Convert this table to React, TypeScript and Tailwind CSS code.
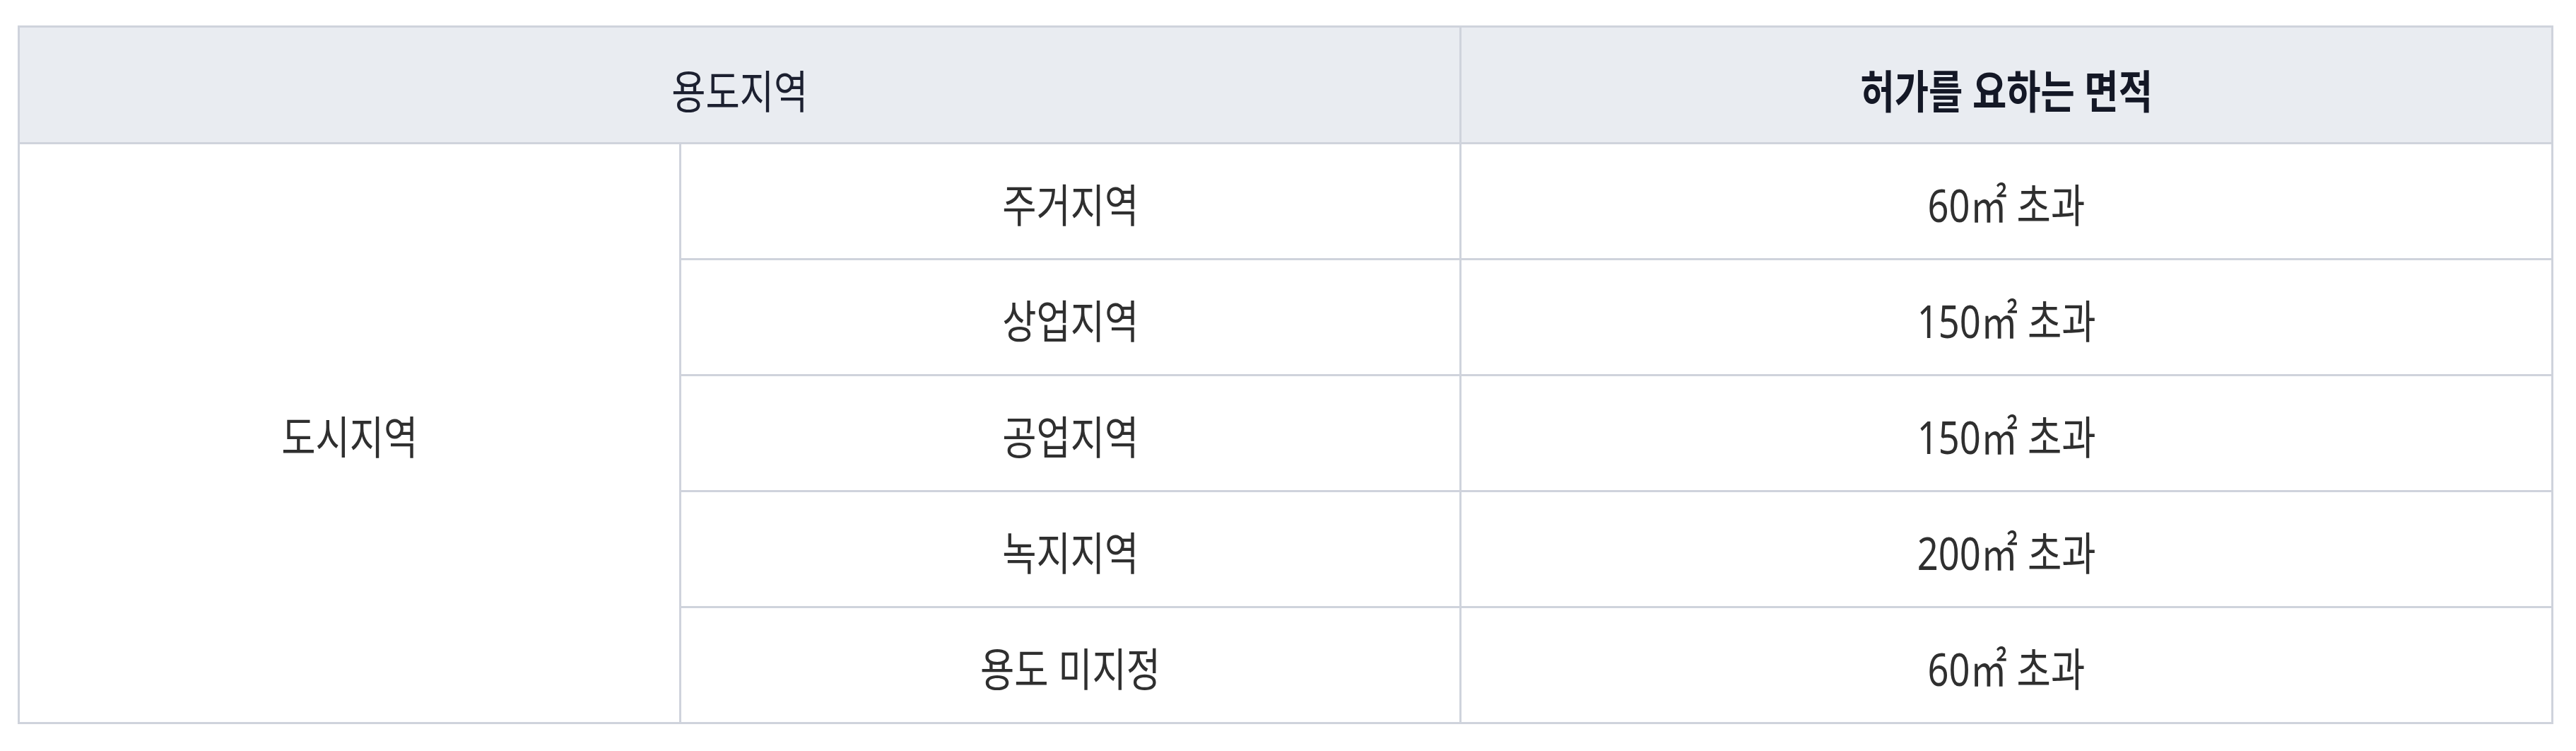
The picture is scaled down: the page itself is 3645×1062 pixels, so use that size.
const rows = [
  { zone: "주거지역", area: "60㎡ 초과" },
  { zone: "상업지역", area: "150㎡ 초과" },
  { zone: "공업지역", area: "150㎡ 초과" },
  { zone: "녹지지역", area: "200㎡ 초과" },
  { zone: "용도 미지정", area: "60㎡ 초과" },
];

function Txt({ children }: { children: React.ReactNode }) {
  return <span className="inline-block scale-x-[0.82] whitespace-nowrap">{children}</span>;
}

export default function App() {
  return (
    <div
      className="bg-white w-[3645px] h-[1062px] pl-[25px] pr-[35px] pt-[36px]"
      style={{ fontFamily: '"Noto Sans", "Noto Sans CJK KR", sans-serif' }}
    >
      <table className="w-[3585px] table-fixed border-collapse border-[3px] border-[#cfd3dc] text-[64px] leading-none">
        <colgroup>
          <col className="w-[936px]" />
          <col className="w-[1104px]" />
          <col className="w-[1545px]" />
        </colgroup>
        <thead>
          <tr className="h-[165px] bg-[#e9ecf1]">
            <th
              colSpan={2}
              className="border-[3px] border-[#cfd3dc] font-normal text-[#1c2030] align-middle pt-[18px]"
            >
              <Txt>용도지역</Txt>
            </th>
            <th className="border-[3px] border-[#cfd3dc] font-bold text-[#141826] align-middle pt-[18px]">
              <Txt>허가를 요하는 면적</Txt>
            </th>
          </tr>
        </thead>
        <tbody className="text-[#2f2f2f]">
          {rows.map((r, i) => (
            <tr key={r.zone} className="h-[164px]">
              {i === 0 && (
                <td
                  rowSpan={rows.length}
                  className="border-[3px] border-[#cfd3dc] text-center align-middle pt-[11px]"
                >
                  <Txt>도시지역</Txt>
                </td>
              )}
              <td className="border-[3px] border-[#cfd3dc] text-center align-middle pt-[11px]">
                <Txt>{r.zone}</Txt>
              </td>
              <td className="border-[3px] border-[#cfd3dc] text-center align-middle pt-[11px]">
                <Txt>{r.area}</Txt>
              </td>
            </tr>
          ))}
        </tbody>
      </table>
    </div>
  );
}
